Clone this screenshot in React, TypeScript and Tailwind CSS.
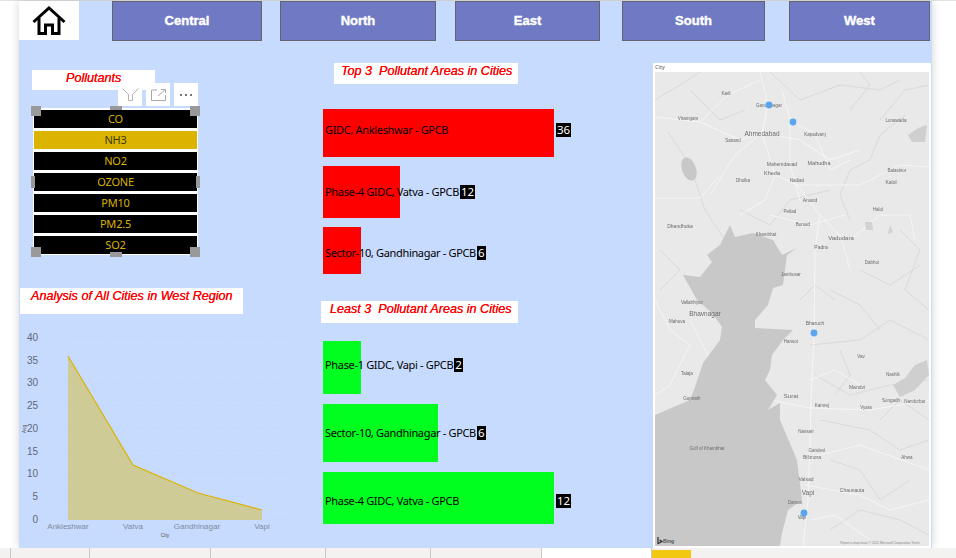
const regions = [
  { name: "Central", className: "ml-[33px] w-[150px]" },
  { name: "North", className: "ml-[18px] w-[156px]" },
  { name: "East", className: "ml-[19px] w-[145px]" },
  { name: "South", className: "ml-[22px] w-[143px]" },
  { name: "West", className: "ml-[24px] w-[141px]" },
];

const pollutants = ["CO", "NH3", "NO2", "OZONE", "PM10", "PM2.5", "SO2"];

const topAreas = [
  { label: "GIDC, Ankleshwar - GPCB", value: 36, row: "mt-[25px] h-[48px]", bar: "w-[231px]", min: "min-w-[232px]", shift: "mb-[6px]" },
  { label: "Phase-4 GIDC, Vatva - GPCB", value: 12, row: "mt-[9px] h-[52px]", bar: "w-[77px]", min: "min-w-[77px]", shift: "" },
  { label: "Sector-10, Gandhinagar - GPCB", value: 6, row: "mt-[9px] h-[47px]", bar: "w-[38px]", min: "min-w-[38px]", shift: "mt-[5px]" },
];

const leastAreas = [
  { label: "Phase-1 GIDC, Vapi - GPCB", value: 2, row: "mt-[18px] h-[53px]", bar: "w-[38px]", min: "min-w-[38px]", shift: "mb-[5px]" },
  { label: "Sector-10, Gandhinagar - GPCB", value: 6, row: "mt-[10px] h-[58px]", bar: "w-[115px]", min: "min-w-[115px]", shift: "" },
  { label: "Phase-4 GIDC, Vatva - GPCB", value: 12, row: "mt-[10px] h-[52px]", bar: "w-[231px]", min: "min-w-[232px]", shift: "mt-[6px]" },
];

const yTicks = [
  { v: 40, y: 337 },
  { v: 35, y: 360 },
  { v: 30, y: 382 },
  { v: 25, y: 405 },
  { v: 20, y: 428 },
  { v: 15, y: 451 },
  { v: 10, y: 473 },
  { v: 5, y: 496 },
  { v: 0, y: 519 },
];

const xTicks = [
  { name: "Ankleshwar", x: 68 },
  { name: "Vatva", x: 133 },
  { name: "Gandhinagar", x: 197 },
  { name: "Vapi", x: 262 },
];

// [text, x, y, size]
const mapLabels: [string, number, number, number][] = [
  ["Kadi", 726, 95, 4.5],
  ["Gandhinagar", 769, 107, 4.5],
  ["Viramgam", 688, 120, 4.5],
  ["Ahmedabad", 762, 136, 6.5],
  ["Sanand", 733, 142, 4.5],
  ["Lunawada", 896, 122, 4.5],
  ["Kapadvanj", 815, 136, 4.5],
  ["Mahudha", 819, 165, 5.5],
  ["Mahemdavad", 782, 166, 5],
  ["Kheda", 772, 175, 5.5],
  ["Dholka", 743, 182, 4.5],
  ["Nadiad", 797, 182, 4.5],
  ["Balasinor", 897, 172, 4.5],
  ["Kalol", 891, 184, 5],
  ["Anand", 810, 202, 5],
  ["Halol", 878, 211, 4.5],
  ["Petlad", 790, 213, 4.5],
  ["Borsad", 803, 226, 4.5],
  ["Vadodara", 841, 240, 6],
  ["Khambhat", 766, 236, 4.5],
  ["Dhandhuka", 680, 228, 5],
  ["Padra", 821, 249, 5],
  ["Jambusar", 791, 276, 4.5],
  ["Dabhoi", 872, 264, 4.5],
  ["Vallabhipur", 692, 304, 4.5],
  ["Bhavnagar", 705, 316, 6.5],
  ["Mahuva", 677, 323, 4.5],
  ["Bharuch", 815, 325, 5],
  ["Hansot", 791, 343, 4.5],
  ["Vav", 861, 358, 4.5],
  ["Talaja", 687, 375, 4.5],
  ["Mandvi", 857, 389, 5],
  ["Gopnath", 692, 400, 4.5],
  ["Surat", 791, 398, 6],
  ["Songadh", 891, 402, 4.5],
  ["Nandurbar", 915, 403, 4.5],
  ["Kamrej", 822, 407, 4.5],
  ["Vyara", 866, 409, 4.5],
  ["Navsari", 806, 433, 4.5],
  ["Gulf of Khambhat", 707, 450, 4.5],
  ["Gandevi", 817, 452, 4.5],
  ["Bilimora", 812, 459, 5],
  ["Ahwa", 907, 459, 4.5],
  ["Valsad", 806, 481, 5],
  ["Chaunauta", 852, 492, 5],
  ["Vapi", 808, 495, 6.5],
  ["Daman", 795, 504, 4.5],
  ["Vapi", 802, 519, 4.5],
  ["Nashik", 893, 376, 4.5],
];

const roads = [
  "M760 72 L768 105 L762 133 L735 155 L710 195",
  "M655 117 L700 122 L740 140 L762 133 L800 140 L830 160 L860 150",
  "M762 133 L775 175 L797 185 L820 215 L841 237 L850 270",
  "M655 198 L700 198 L720 175",
  "M797 185 L860 185 L900 165 L929 167",
  "M820 215 L815 250 L814 333 L811 400 L810 440 L808 500 L803 546",
  "M770 400 L810 408 L870 410 L929 400",
  "M850 240 L880 215 L910 215 L915 240",
  "M690 345 L670 385 L655 395",
  "M690 320 L710 360 L720 340",
  "M800 460 L860 445 L929 470",
  "M805 485 L860 495 L890 510 L929 500",
  "M700 122 L728 95 L760 80",
  "M790 120 L815 134 L830 170 L850 160",
  "M770 215 L810 225 L845 215",
  "M775 175 L765 200 L740 215",
  "M782 90 L790 120 L790 165 L800 200",
  "M655 300 L670 330 L690 345",
  "M810 380 L835 370 L860 385",
  "M810 520 L835 515 L870 540",
];

const rivers = [
  "M668 132 L690 165 L705 210 L725 240",
  "M700 72 L680 85 L655 100",
  "M770 72 L800 100 L840 85 L880 90 L900 80",
  "M905 115 L880 135 L870 160 L850 170 L840 195 L850 220",
  "M810 345 L860 340 L890 320 L929 340",
  "M815 375 L850 395 L890 385 L929 380",
  "M820 420 L870 430 L900 450 L929 440",
  "M830 530 L860 510 L900 520 L929 535",
  "M860 270 L890 285 L920 265",
  "M740 210 L770 225 L790 200 L830 190",
  "M880 120 L905 90 L929 85",
  "M830 290 L860 305 L880 330",
  "M690 90 L720 120 L745 110",
  "M850 110 L870 85 L860 72",
  "M830 460 L860 470 L880 500 L910 480",
  "M900 230 L920 250 L905 290 L929 310",
  "M835 300 L815 285 L800 300",
  "M840 350 L850 375 L835 395",
  "M660 250 L680 270 L660 290",
  "M880 420 L900 400 L929 420",
];

const Bar = ({ item, color }: { item: typeof topAreas[number]; color: string }) => (
  <div className={`relative flex items-center ${item.row}`}>
    <div className={`absolute inset-y-0 left-0 ${item.bar} ${color}`} />
    <div className={`relative flex items-center ${item.shift}`}>
      <span className={`pl-[2px] text-[11px] tracking-[-0.33px] text-black whitespace-nowrap ${item.min}`}>
        {item.label}
      </span>
      <span className="ml-[1px] bg-black text-white text-[11.5px] leading-[14px] px-[1px] text-center">
        {item.value}
      </span>
    </div>
  </div>
);

const Title = ({ text, className }: { text: string; className: string }) => (
  <div
    className={`bg-white pt-px text-[#ff0000] italic text-[12.6px] leading-[15px] font-['Liberation_Sans',sans-serif] [text-shadow:0_0_0.6px_#ff0000] ${className}`}
  >
    {text}
  </div>
);

const Handle = ({ className }: { className: string }) => (
  <div className={`absolute bg-[#999999] ${className}`} />
);

export default function App() {
  return (
    <div className="w-[956px] h-[558px] bg-white overflow-hidden flex flex-col font-['Noto_Sans',sans-serif]">
      <div className="h-px bg-[#e3e3e3]" />

      {/* report page */}
      <div className="ml-[19px] w-[913px] h-[547px] bg-[#c7dbfe] shadow-[0_0_9px_rgba(0,0,0,0.18)]">
        {/* nav */}
        <div className="flex h-10">
          <div className="w-[60px] h-[39px] bg-white flex items-center justify-center">
            <svg width="34" height="30" viewBox="0 0 34 30" fill="none" stroke="#000" strokeWidth="3">
              <path d="M1.5 16 L17 2 L32.5 16" />
              <path d="M7 12 V27.5 H13.5 V19 H20.5 V27.5 H27 V12" />
            </svg>
          </div>
          {regions.map((r) => (
            <div
              key={r.name}
              className={`${r.className} h-10 bg-[#7079c4] border border-[#62656f] flex items-center justify-center text-white text-[13px] font-bold font-['Liberation_Sans',sans-serif] [-webkit-text-stroke:0.4px_white]`}
            >
              {r.name}
            </div>
          ))}
        </div>

        <div className="flex">
          {/* left column */}
          <div className="w-[304px]">
            <Title text="Pollutants" className="ml-[13px] mt-[29px] w-[123px] h-5 pl-[34px]" />

            <div className="relative ml-[14px] mt-[18px] w-[165px] h-[147px] bg-white p-px flex flex-col gap-[3px] pt-[2px]">
              <div className="absolute -top-[25px] left-[85px] w-6 h-[23px] bg-white flex items-center justify-center">
                <svg width="17" height="13" viewBox="0 0 17 13" fill="none" stroke="#b5b5b5" strokeWidth="1">
                  <path d="M0.5 0.5 L6.5 6.5 V12.5 H10.5 V6.5 L16.5 0.5" />
                </svg>
              </div>
              <div className="absolute -top-[25px] left-[113px] w-6 h-[23px] bg-white flex items-center justify-center">
                <svg width="15" height="12" viewBox="0 0 15 12" fill="none" stroke="#a8a8a8" strokeWidth="1">
                  <path d="M6 1 H0.5 V11.5 H14.5 V6" />
                  <path d="M7 7 L14 0.8 M10 0.5 H14.5 V4" />
                </svg>
              </div>
              <div className="absolute -top-[25px] left-[141px] w-6 h-[23px] bg-white flex items-center justify-center gap-[3px]">
                <span className="w-[2px] h-[2px] bg-[#777]" />
                <span className="w-[2px] h-[2px] bg-[#777]" />
                <span className="w-[2px] h-[2px] bg-[#777]" />
              </div>

              {pollutants.map((p) => (
                <div
                  key={p}
                  className={
                    p === "NH3"
                      ? "h-[18px] bg-[#dbb300] text-[#3d3d10] text-[11px] tracking-[-0.2px] leading-[18px] text-center"
                      : "h-[18px] bg-black text-[#dbb300] text-[11px] tracking-[-0.2px] leading-[18px] text-center"
                  }
                >
                  {p}
                </div>
              ))}

              <Handle className="-left-[2px] -top-[2px] w-[10px] h-[10px]" />
              <Handle className="left-[77px] -top-[2px] w-3 h-1" />
              <Handle className="-right-[2px] -top-[2px] w-[10px] h-[10px]" />
              <Handle className="-left-[2px] top-[68px] w-1 h-3" />
              <Handle className="-right-[2px] top-[68px] w-1 h-3" />
              <Handle className="-left-[2px] -bottom-[2px] w-[10px] h-[10px]" />
              <Handle className="left-[77px] -bottom-[2px] w-3 h-[5px]" />
              <Handle className="-right-[2px] -bottom-[2px] w-[10px] h-[10px]" />
            </div>

            <Title text="Analysis of All Cities in West Region" className="ml-px mt-[33px] w-[223px] h-[26px] pl-[11px]" />

            <svg className="block mt-[11px] ml-px" width="270" height="220" viewBox="20 325 270 220">
              {yTicks.map((t) => (
                <line key={t.v} x1="62" x2="288" y1={t.y} y2={t.y} stroke="#c0d4f6" strokeWidth="1" strokeDasharray="2 3" />
              ))}
              <path d="M68 356 L133 465 L198 493 L262 510 V520 H68 Z" fill="#cfcb97" />
              <path d="M68 356 L133 465 L198 493 L262 510" fill="none" stroke="#dbb300" strokeWidth="1.2" />
              {yTicks.map((t) => (
                <text key={t.v} x="38" y={t.y + 4} textAnchor="end" fontSize="10" fill="#5f6878" fontFamily="Liberation Sans">
                  {t.v}
                </text>
              ))}
              {xTicks.map((t) => (
                <text key={t.name} x={t.x} y="529" textAnchor="middle" fontSize="8" fill="#7f8aa0" fontFamily="Liberation Sans">
                  {t.name}
                </text>
              ))}
              <text x="165" y="537" textAnchor="middle" fontSize="5" fill="#555" fontFamily="Liberation Sans">City</text>
              <text transform="translate(26 429) rotate(-90)" textAnchor="middle" fontSize="5" fill="#555" fontFamily="Liberation Sans">Avg</text>
            </svg>
          </div>

          {/* middle column */}
          <div className="w-[330px]">
            <Title text="Top 3  Pollutant Areas in Cities" className="ml-[11px] mt-[22px] w-[184px] h-[21px] pl-[7px] whitespace-pre" />
            {topAreas.map((a) => (
              <Bar key={a.label} item={a} color="bg-[#ff0000]" />
            ))}
            <Title text="Least 3  Pollutant Areas in Cities" className="-ml-[2px] mt-[27px] w-[197px] h-[22px] pl-[9px] whitespace-pre" />
            {leastAreas.map((a) => (
              <Bar key={a.label} item={a} color="bg-[#00ff1e]" />
            ))}
          </div>

          {/* map */}
          <div className="w-[278px] h-[485px] mt-[22px] bg-white pl-[2px] pr-[2px] pb-[1px]">
            <div className="h-[9px] text-[5.5px] leading-[9px] text-[#555]">City</div>
            <svg className="block" width="274" height="474" viewBox="655 72 274 474">
              <rect x="655" y="72" width="274" height="474" fill="#e9e9e9" />
              <g className="blur-[0.35px]">
                {rivers.map((d) => (
                  <path key={d} d={d} fill="none" stroke="#d2d2d2" strokeWidth="0.7" />
                ))}
                {roads.map((d) => (
                  <path key={d} d={d} fill="none" stroke="#fafafa" strokeWidth="0.7" />
                ))}
                <path
                  d="M730 225 L735 237 L753 233 L773 240 L782 255 L797 248 L787 255 L783 285 L773 288 L768 305 L755 320 L755 328 L793 330 L783 340 L772 355 L770 370 L765 380 L777 395 L768 410 L780 403 L780 420 L797 460 L802 500 L788 510 L782 533 L780 546 L655 546 L655 415 L690 400 L695 387 L703 363 L720 340 L722 327 L712 313 L697 300 L683 275 L700 277 L712 262 L707 255 L720 245 Z"
                  fill="#c8c8c8"
                />
                <ellipse cx="689" cy="169" rx="7" ry="12" transform="rotate(-20 689 169)" fill="#c8c8c8" />
                <path d="M893 385 L905 378 L915 365 L927 360 L929 375 L915 390 L900 397 Z" fill="#cfcfcf" />
                <path d="M908 135 L918 128 L927 125 L925 142 L912 142 Z" fill="#cfcfcf" />
                <path d="M865 222 L872 222 L873 230 L866 230 Z M890 225 L893 232 L888 234 Z" fill="#d2d2d2" />
                {mapLabels.map(([t, x, y, s]) => (
                  <text key={`${t}${x}`} x={x} y={y} textAnchor="middle" fontSize={s} fill="#6a6a6a" fontFamily="Liberation Sans">
                    {t}
                  </text>
                ))}
              </g>
              {[[769, 105], [793, 122], [814, 333], [804, 513]].map(([x, y]) => (
                <circle key={x} cx={x} cy={y} r="3.4" fill="#5ba5ef" />
              ))}
              <path d="M658 537 V543.5 L662 541.5 L659.5 540" fill="none" stroke="#222" strokeWidth="1.1" />
              <text x="663" y="543" fontSize="5" fontWeight="bold" fill="#555" fontFamily="Liberation Sans">Bing</text>
              <text x="880" y="544" textAnchor="middle" fontSize="3.2" fill="#888" fontFamily="Liberation Sans">
                Report a map issue © 2021 Microsoft Corporation Terms
              </text>
            </svg>
          </div>
        </div>
      </div>

      {/* page tabs */}
      <div className="flex flex-1 bg-[#f3f2f1]">
        <div className="w-[11px] border-r border-[#c8c8c8]" />
        <div className="w-[79px] border-r border-[#c8c8c8]" />
        <div className="w-[121px] border-r border-[#c8c8c8]" />
        <div className="w-[115px] border-r border-[#c8c8c8]" />
        <div className="w-[105px] border-r border-[#c8c8c8]" />
        <div className="w-[111px] border-r border-[#c8c8c8]" />
        <div className="w-[110px] bg-white border-r border-[#c8c8c8]" />
        <div className="w-[39px] mt-[2px] bg-[#f2c811]" />
      </div>
    </div>
  );
}
